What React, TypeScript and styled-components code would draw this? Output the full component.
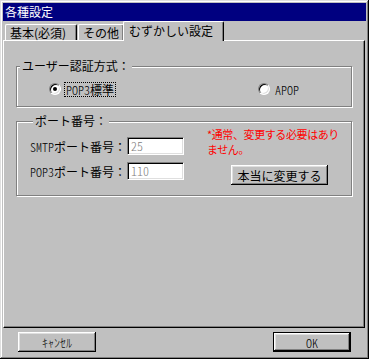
import styled, { createGlobalStyle } from 'styled-components'

const Global = createGlobalStyle`
	html, body {
		margin: 0;
		padding: 0;
		background: #c0c0c0;
	}
	body {
		font-family: "Noto Sans CJK JP", "DejaVu Sans", sans-serif;
		font-size: 12px;
		color: #000;
	}
`

const Window = styled.div`
	box-sizing: border-box;
	width: 369px;
	height: 359px;
	padding: 3px;
	background: #c0c0c0;
	display: flex;
	flex-direction: column;
	box-shadow:
		inset -1px -1px #000,
		inset 1px 1px #dfdfdf,
		inset -2px -2px #808080,
		inset 2px 2px #fff;
`

const TitleBar = styled.div`
	height: 18px;
	line-height: 18px;
	background: #000080;
	color: #fff;
	padding-left: 2px;
	font-size: 12px;
`

const TabStrip = styled.div`
	height: 19px;
	display: flex;
	align-items: flex-end;
	padding-left: 2px;
	position: relative;
	z-index: 1;
`

const Tab = styled.div<{ $active?: boolean; $w: number }>`
	box-sizing: border-box;
	width: ${(p) => p.$w}px;
	height: ${(p) => (p.$active ? 20 : 16)}px;
	margin-bottom: ${(p) => (p.$active ? -1 : 0)}px;
	margin-left: ${(p) => (p.$active ? -1 : 1)}px;
	padding-left: ${(p) => (p.$active ? 5 : 4)}px;
	line-height: ${(p) => (p.$active ? 17 : 15)}px;
	background: #c0c0c0;
	border-top: 1px solid #fff;
	border-left: 1px solid #fff;
	border-right: 1px solid #000;
	border-radius: 2px 2px 0 0;
	box-shadow: inset -1px 0 #808080;
	white-space: nowrap;
	&:first-child {
		margin-left: 0;
	}
`

const Panel = styled.div`
	box-sizing: border-box;
	height: 288px;
	margin-right: 1px;
	padding: 18px 11px 0 12px;
	border-top: 1px solid #fff;
	border-left: 1px solid #fff;
	border-right: 1px solid #000;
	border-bottom: 1px solid #000;
	box-shadow: inset -1px -1px #808080;
	display: flex;
	flex-direction: column;
	gap: 7px;
`

const Group = styled.fieldset<{ $pad: string }>`
	margin: 0;
	padding: ${(p) => p.$pad};
	min-inline-size: 0;
	border: 1px solid #808080;
	box-shadow: 1px 1px 0 #fff, inset 1px 1px 0 #fff;
	margin-right: 1px;
`

const Legend = styled.legend`
	margin-left: 3px;
	padding: 0 2px;
	line-height: 14px;
	background: #c0c0c0;
`

const RadioRow = styled.div`
	display: flex;
	align-items: center;
	height: 16px;
`

const RadioItem = styled.label<{ $left: number }>`
	display: flex;
	align-items: center;
	margin-left: ${(p) => p.$left}px;
	gap: 4px;
`

const RadioDot = styled.span<{ $checked?: boolean }>`
	box-sizing: border-box;
	position: relative;
	width: 12px;
	height: 12px;
	border-radius: 50%;
	border: 1px solid;
	border-color: #808080 #fff #fff #808080;
	background: #fff;
	box-shadow: inset 1px 1px #000, inset -1px -1px #dfdfdf;
	&::after {
		content: '';
		display: ${(p) => (p.$checked ? 'block' : 'none')};
		position: absolute;
		left: 3px;
		top: 3px;
		width: 4px;
		height: 4px;
		border-radius: 50%;
		background: #000;
	}
`

const RadioText = styled.span<{ $focus?: boolean }>`
	padding: 0 1px;
	line-height: 13px;
	outline: ${(p) => (p.$focus ? '1px dotted #000' : 'none')};
`

const Half = styled.span`
	font-feature-settings: "hwid";
	font-weight: 300;
`

const PortBody = styled.div`
	display: grid;
	grid-template-columns: 177px 1fr;
`

const PortFields = styled.div`
	display: flex;
	flex-direction: column;
	gap: 7px;
	padding-top: 9px;
`

const FieldRow = styled.div`
	display: flex;
	align-items: center;
	height: 18px;
`

const FieldLabel = styled.span`
	width: 97px;
	white-space: nowrap;
`

const Input = styled.div`
	box-sizing: border-box;
	width: 57px;
	height: 18px;
	padding-left: 3px;
	line-height: 16px;
	color: #808080;
	background: #fff;
	border: 1px solid;
	border-color: #808080 #fff #fff #808080;
	box-shadow: inset 1px 1px #000, inset -1px -1px #dfdfdf;
`

const Note = styled.div`
	display: flex;
	flex-direction: column;
	align-items: flex-start;
`

const Warning = styled.div`
	color: #ff0000;
	font-size: 11px;
	line-height: 15px;
	letter-spacing: -0.4px;
	white-space: nowrap;
	margin-top: -1px;
`

const Button = styled.button<{ $w: number; $default?: boolean }>`
	box-sizing: border-box;
	width: ${(p) => p.$w}px;
	height: 20px;
	padding: 0;
	font-family: inherit;
	font-size: 12px;
	color: #000;
	background: #c0c0c0;
	border: ${(p) => (p.$default ? '1px solid #000' : 'none')};
	box-shadow:
		inset -1px -1px #000,
		inset 1px 1px #fff,
		inset -2px -2px #808080,
		inset 2px 2px #dfdfdf;
`

const ChangeButton = styled(Button)`
	margin-left: 24px;
	margin-top: 8px;
`

const Footer = styled.div`
	display: flex;
	justify-content: space-between;
	padding: 4px 15px 0 15px;
`

export default function App() {
	return (
		<>
			<Global />
			<Window>
				<TitleBar>各種設定</TitleBar>
				<TabStrip>
					<Tab $w={72}>基本(必須)</Tab>
					<Tab $w={46}>その他</Tab>
					<Tab $w={101} $active>むずかしい設定</Tab>
				</TabStrip>
				<Panel>
					<Group $pad="8px 0 9px 0">
						<Legend>ユーザー認証方式：</Legend>
						<RadioRow>
							<RadioItem $left={32}>
								<RadioDot $checked />
								<RadioText $focus><Half>POP3</Half>標準</RadioText>
							</RadioItem>
							<RadioItem $left={143}>
								<RadioDot />
								<RadioText><Half>APOP</Half></RadioText>
							</RadioItem>
						</RadioRow>
					</Group>
					<Group $pad="0 0 10px 13px">
						<Legend>ポート番号：</Legend>
						<PortBody>
							<PortFields>
								<FieldRow>
									<FieldLabel><Half>SMTP</Half>ポート番号：</FieldLabel>
									<Input><Half>25</Half></Input>
								</FieldRow>
								<FieldRow>
									<FieldLabel><Half>POP3</Half>ポート番号：</FieldLabel>
									<Input><Half>110</Half></Input>
								</FieldRow>
							</PortFields>
							<Note>
								<Warning>*通常、変更する必要はあり<br />ません。</Warning>
								<ChangeButton $w={97}>本当に変更する</ChangeButton>
							</Note>
						</PortBody>
					</Group>
				</Panel>
				<Footer>
					<Button $w={78}><Half>ｷｬﾝｾﾙ</Half></Button>
					<Button $w={78} $default><Half>OK</Half></Button>
				</Footer>
			</Window>
		</>
	)
}
